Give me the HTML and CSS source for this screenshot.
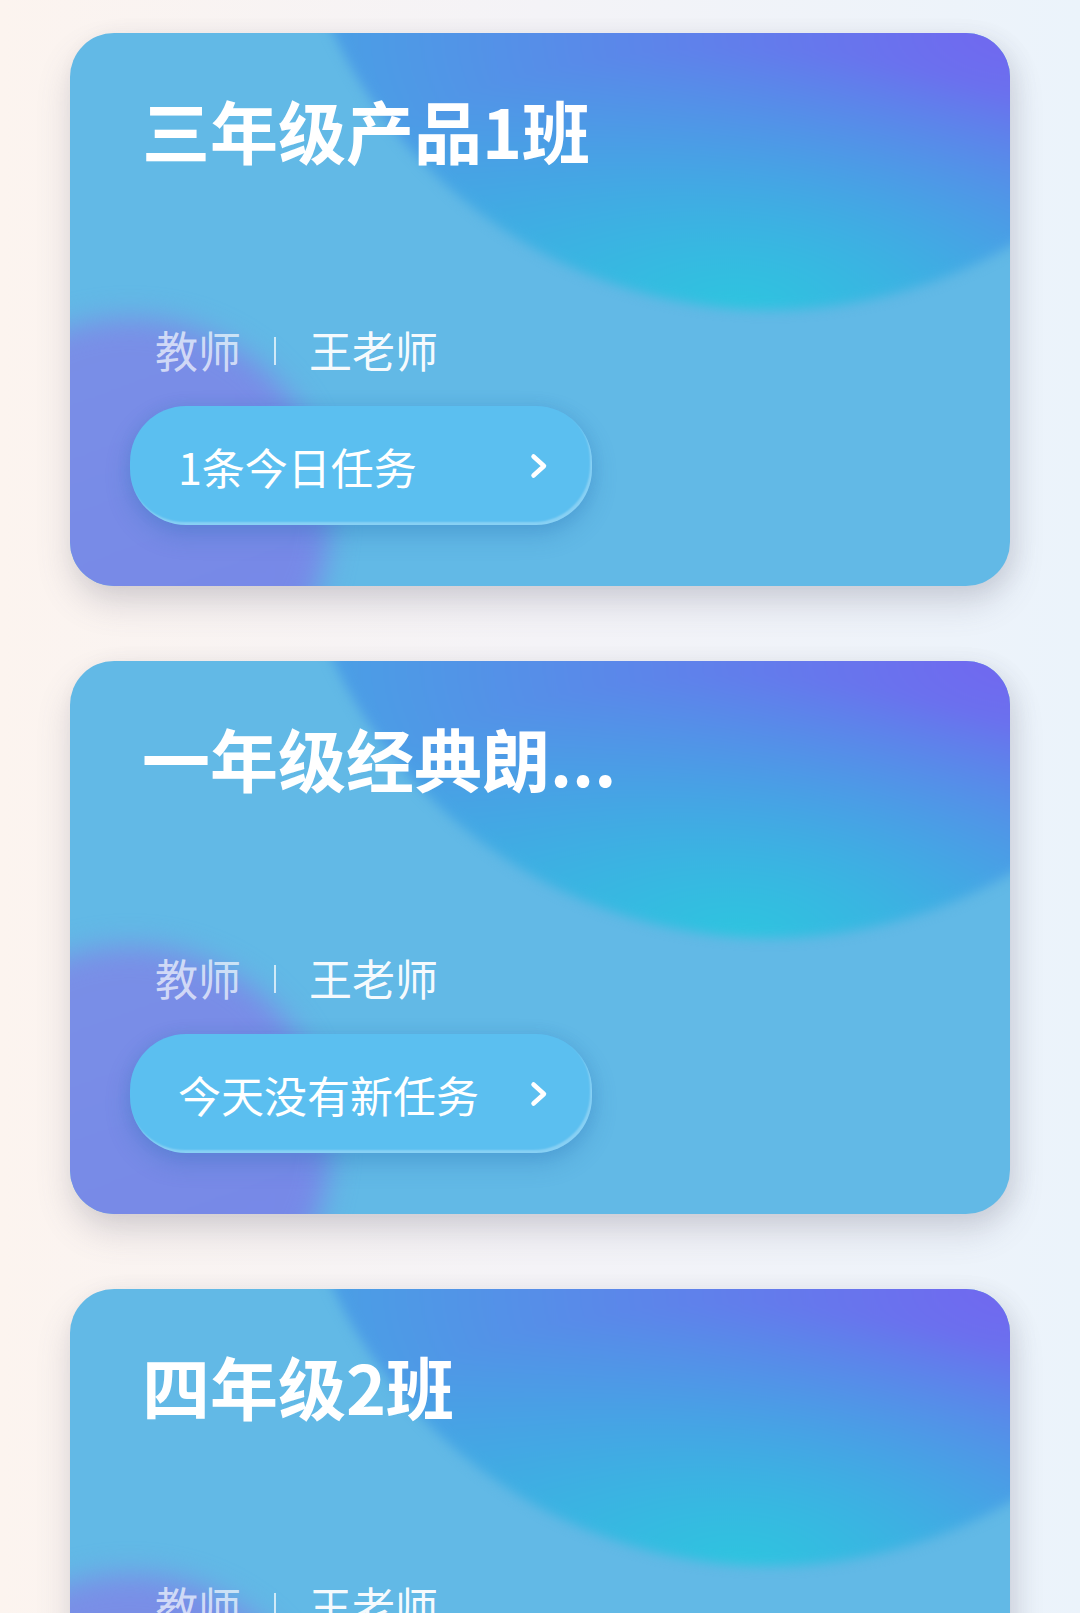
FILE: index.html
```html
<!DOCTYPE html>
<html lang="zh-CN">
<head>
    <meta charset="UTF-8">
    <meta name="viewport" content="width=device-width, initial-scale=1.0">
    <title>我的班级</title>
    <link rel="stylesheet" href="styles.css">
</head>
<body>
    <div class="page">
        <div class="class-list">

            <div class="class-card">
                <div class="glow glow-top"></div>
                <div class="glow glow-bottom"></div>
                <h2 class="class-name">三年级产品1班</h2>
                <div class="teacher">
                    <span class="teacher-label">教师</span>
                    <span class="teacher-sep"></span>
                    <span class="teacher-name">王老师</span>
                </div>
                <a class="task-btn" href="#">
                    <span>1条今日任务</span>
                    <svg class="chevron" viewBox="0 0 18 26" width="18" height="26">
                        <path d="M3.5 3.5 L14 13 L3.5 22.5" />
                    </svg>
                </a>
            </div>

            <div class="class-card">
                <div class="glow glow-top"></div>
                <div class="glow glow-bottom"></div>
                <h2 class="class-name">一年级经典朗...</h2>
                <div class="teacher">
                    <span class="teacher-label">教师</span>
                    <span class="teacher-sep"></span>
                    <span class="teacher-name">王老师</span>
                </div>
                <a class="task-btn" href="#">
                    <span>今天没有新任务</span>
                    <svg class="chevron" viewBox="0 0 18 26" width="18" height="26">
                        <path d="M3.5 3.5 L14 13 L3.5 22.5" />
                    </svg>
                </a>
            </div>

            <div class="class-card">
                <div class="glow glow-top"></div>
                <div class="glow glow-bottom"></div>
                <h2 class="class-name">四年级2班</h2>
                <div class="teacher">
                    <span class="teacher-label">教师</span>
                    <span class="teacher-sep"></span>
                    <span class="teacher-name">王老师</span>
                </div>
                <a class="task-btn" href="#">
                    <span>今天没有新任务</span>
                    <svg class="chevron" viewBox="0 0 18 26" width="18" height="26">
                        <path d="M3.5 3.5 L14 13 L3.5 22.5" />
                    </svg>
                </a>
            </div>

        </div>
    </div>
</body>
</html>
```

FILE: styles.css
```css
* {
    margin: 0;
    padding: 0;
    box-sizing: border-box;
}

body {
    font-family: "Noto Sans CJK SC", "Noto Sans", sans-serif;
    background: linear-gradient(90deg, #fcf4ef 0%, #f4f3f7 50%, #ebf3fb 100%);
}

.page {
    height: 100vh;
    overflow: hidden;
    padding: 33px 70px;
}

.class-list {
    display: flex;
    flex-direction: column;
    gap: 75px;
}

.class-card {
    position: relative;
    height: 553px;
    border-radius: 44px;
    overflow: hidden;
    background: #62b9e6;
    padding: 57px 0 0 72px;
    display: flex;
    flex-direction: column;
    align-items: flex-start;
    box-shadow: 0 18px 34px rgba(90, 90, 115, 0.2), 8px 4px 22px rgba(60, 60, 80, 0.08);
}

/* decorative blobs in the card background */
.glow {
    position: absolute;
    border-radius: 50%;
    pointer-events: none;
}

.glow-top {
    left: 217px;
    top: -689px;
    width: 966px;
    height: 966px;
    background:
        radial-gradient(ellipse 480px 260px at 450px 966px, rgba(46, 196, 223, 1) 0%, rgba(46, 196, 223, 0) 100%),
        radial-gradient(ellipse 700px 330px at 740px 689px, rgba(114, 102, 240, 1) 0%, rgba(114, 102, 240, 0) 100%),
        #4a9fe5;
    filter: blur(6px);
}

.glow-bottom {
    left: -140px;
    top: 285px;
    width: 400px;
    height: 400px;
    background: linear-gradient(160deg, #7a90e6 0%, #7686e8 100%);
    filter: blur(14px);
}

.class-name {
    position: relative;
    font-size: 68px;
    line-height: 80px;
    font-weight: 700;
    color: #fff;
    white-space: nowrap;
}

.teacher {
    position: relative;
    margin-top: 149px;
    margin-left: 13px;
    display: flex;
    align-items: center;
    height: 60px;
    font-size: 43px;
    line-height: 60px;
}

.teacher-label {
    color: rgba(255, 255, 255, 0.68);
}

.teacher-sep {
    width: 2px;
    height: 28px;
    margin: 4px 33px 0;
    background: rgba(255, 255, 255, 0.7);
}

.teacher-name {
    color: rgba(255, 255, 255, 0.96);
}

.task-btn {
    position: relative;
    margin-top: 27px;
    margin-left: -12px;
    width: 462px;
    height: 119px;
    border-radius: 56px;
    padding: 0 44px 0 48px;
    display: flex;
    align-items: center;
    justify-content: space-between;
    background: #5bbff0;
    color: #fff;
    font-size: 43px;
    text-decoration: none;
    box-shadow: 0 10px 24px rgba(40, 110, 180, 0.3), 0 0 14px rgba(40, 110, 180, 0.12), inset -2px -3px 2px rgba(255, 255, 255, 0.28);
}

.chevron path {
    fill: none;
    stroke: #fff;
    stroke-width: 4.5;
    stroke-linecap: round;
    stroke-linejoin: round;
}
```
